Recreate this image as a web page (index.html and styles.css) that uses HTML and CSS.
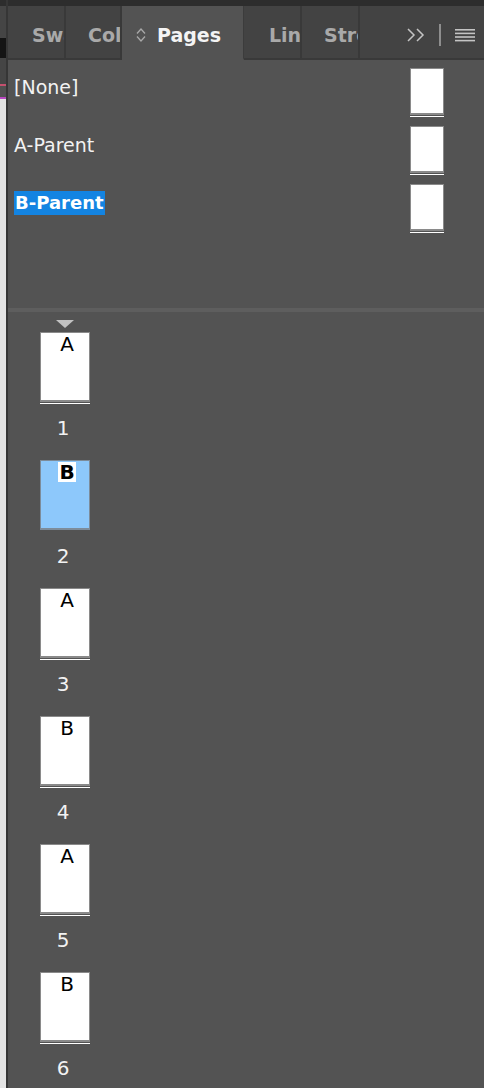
FILE: index.html
```html
<!DOCTYPE html>
<html>
<head>
<meta charset="utf-8">
<link rel="stylesheet" href="styles.css">
</head>
<body>
<div class="app">
  <div class="strip">
    <div class="seg seg-top"></div>
    <div class="seg seg-grey1"></div>
    <div class="seg seg-black"></div>
    <div class="seg seg-grey2"></div>
    <div class="seg seg-pink"></div>
    <div class="seg seg-grey3"></div>
    <div class="seg seg-mag"></div>
    <div class="seg seg-light"></div>
  </div>
  <div class="strip-edge"></div>
  <div class="panel">
    <div class="topbar"></div>
    <div class="tabs">
      <div class="tab tab-sw"><span class="tab-label tab-clip">Swatches</span></div>
      <div class="tab tab-col"><span class="tab-label tab-clip">Color</span></div>
      <div class="tab tab-active">
        <svg class="updown" width="10" height="16" viewBox="0 0 10 16"><path d="M1 6.5 L5 2 L9 6.5" fill="none" stroke="#a8a8a8" stroke-width="1.3"/><path d="M1 9.5 L5 14 L9 9.5" fill="none" stroke="#a8a8a8" stroke-width="1.3"/></svg>
        <span class="tab-label">Pages</span>
      </div>
      <div class="tab tab-lin"><span class="tab-label tab-clip">Links</span></div>
      <div class="tab tab-str"><span class="tab-label tab-clip">Stroke</span></div>
      <div class="tab tab-rest">
        <svg class="more" width="18" height="14" viewBox="0 0 18 14"><path d="M1 1 L7 7 L1 13" fill="none" stroke="#c4c4c4" stroke-width="1.5"/><path d="M10 1 L16 7 L10 13" fill="none" stroke="#c4c4c4" stroke-width="1.5"/></svg>
        <span class="vbar"></span>
        <svg class="menu" width="20" height="13" viewBox="0 0 20 13"><rect x="0" y="0" width="20" height="1.6" fill="#c4c4c4"/><rect x="0" y="3.6" width="20" height="1.6" fill="#c4c4c4"/><rect x="0" y="7.2" width="20" height="1.6" fill="#c4c4c4"/><rect x="0" y="10.8" width="20" height="1.6" fill="#c4c4c4"/></svg>
      </div>
    </div>
    <div class="parents">
      <div class="prow"><span class="pname">[None]</span><div class="thumb"></div></div>
      <div class="prow"><span class="pname">A-Parent</span><div class="thumb"></div></div>
      <div class="prow"><span class="pname pname-sel">B-Parent</span><div class="thumb"></div></div>
    </div>
    <div class="splitter"></div>
    <div class="pages">
      <div class="marker"></div>
      <div class="pitem"><div class="page"><span class="pletter">A</span></div><div class="pnum">1</div></div>
      <div class="pitem"><div class="page page-sel"><span class="pletter pletter-sel">B</span></div><div class="pnum">2</div></div>
      <div class="pitem"><div class="page"><span class="pletter">A</span></div><div class="pnum">3</div></div>
      <div class="pitem"><div class="page"><span class="pletter">B</span></div><div class="pnum">4</div></div>
      <div class="pitem"><div class="page"><span class="pletter">A</span></div><div class="pnum">5</div></div>
      <div class="pitem"><div class="page"><span class="pletter">B</span></div><div class="pnum">6</div></div>
    </div>
  </div>
</div>
</body>
</html>
```
FILE: styles.css
```css
html, body {
  margin: 0;
  padding: 0;
  background: #535353;
}
.app {
  display: flex;
  width: 484px;
  height: 1088px;
  overflow: hidden;
  background: #535353;
  font-family: "DejaVu Sans", sans-serif;
}
.strip {
  width: 6px;
  display: flex;
  flex-direction: column;
  flex-shrink: 0;
}
.seg { flex-shrink: 0; }
.seg-top { height: 6px; background: #2d2d2d; }
.seg-grey1 { height: 32px; background: #454545; }
.seg-black { height: 20px; background: #141414; }
.seg-grey2 { height: 26px; background: #454545; }
.seg-pink { height: 2px; background: #c4506e; }
.seg-grey3 { height: 11px; background: #505050; }
.seg-mag { height: 2px; background: #b848c0; }
.seg-light { flex: 1; background: #e4e4e4; }
.strip-edge {
  width: 2px;
  flex-shrink: 0;
  background: #363636;
}
.panel {
  flex: 1;
  display: flex;
  flex-direction: column;
  min-width: 0;
}
.topbar {
  height: 6px;
  background: #2d2d2d;
  flex-shrink: 0;
}
.tabs {
  display: flex;
  height: 54px;
  flex-shrink: 0;
}
.tab {
  box-sizing: border-box;
  height: 54px;
  background: #434343;
  border-right: 2px solid #393939;
  border-bottom: 2px solid #393939;
  padding-top: 18px;
  overflow: hidden;
  white-space: nowrap;
  display: flex;
  align-items: flex-start;
  flex-shrink: 0;
}
.tab-label {
  font-weight: bold;
  font-size: 19px;
  line-height: 22px;
  color: #a9a9a9;
}
.tab-clip {
  display: block;
  flex: 1;
  min-width: 0;
  overflow: hidden;
  white-space: nowrap;
  text-overflow: clip;
}
.tab-sw { width: 58px; padding-left: 24px; }
.tab-col { width: 56px; padding-left: 22px; }
.tab-active {
  width: 122px;
  padding-left: 14px;
  background: #535353;
  border-bottom-color: #535353;
  border-right: 1px solid #3c3c3c;
}
.tab-active .tab-label { color: #f4f4f4; margin-left: 11px; }
.updown { margin-top: 3px; }
.tab-lin { width: 58px; padding-left: 25px; }
.tab-str { width: 58px; padding-left: 22px; }
.tab-rest {
  flex: 1;
  border-right: none;
  padding-top: 0;
  padding-right: 9px;
  align-items: center;
  justify-content: flex-end;
}
.more { margin-top: 6px; }
.vbar {
  width: 2px;
  height: 22px;
  background: #8e8e8e;
  margin: 6px 14px 0 14px;
}
.menu { margin-top: 6px; }
.parents {
  box-sizing: border-box;
  height: 248px;
  padding: 8px 40px 0 6px;
  flex-shrink: 0;
}
.prow {
  height: 58px;
  display: flex;
  justify-content: space-between;
  align-items: flex-start;
}
.pname {
  margin-top: 7px;
  font-size: 19px;
  line-height: 24px;
  color: #f2f2f2;
}
.pname-sel {
  font-size: 18px;
  font-weight: bold;
  background: #1384e2;
  color: #ffffff;
  padding: 0 1px;
}
.thumb {
  box-sizing: border-box;
  width: 34px;
  height: 47px;
  background: #ffffff;
  border: 1px solid #8a8a8a;
  border-bottom-width: 2px;
  box-shadow: 0 1px 0 #535353, 0 2px 0 #ffffff;
}
.splitter {
  height: 4px;
  background: #5e5e5e;
  flex-shrink: 0;
}
.pages {
  flex: 1;
  display: flex;
  flex-direction: column;
  align-items: flex-start;
  padding: 8px 0 0 32px;
  gap: 20px;
}
.marker {
  width: 0;
  height: 0;
  border-left: 9px solid transparent;
  border-right: 9px solid transparent;
  border-top: 8px solid #c2c2c2;
  margin-left: 16px;
  margin-bottom: -16px;
}
.pitem {
  width: 50px;
  display: flex;
  flex-direction: column;
  align-items: center;
}
.page {
  box-sizing: border-box;
  width: 50px;
  height: 70px;
  background: #ffffff;
  border: 1px solid #8a8a8a;
  border-bottom-width: 2px;
  box-shadow: 0 1px 0 #535353, 0 2px 0 #ffffff;
  display: flex;
  justify-content: center;
  align-items: flex-start;
  padding: 1px 0 0 4px;
}
.page-sel {
  background: #8dc8fb;
  border-color: #7d8c9a;
  box-shadow: none;
}
.pletter {
  font-size: 20px;
  line-height: 20px;
  color: #000000;
}
.pletter-sel {
  font-weight: bold;
  background: #ffffff;
  padding: 0 1px;
}
.pnum {
  margin-top: 14px;
  font-size: 20px;
  line-height: 24px;
  color: #f2f2f2;
  padding-right: 4px;
}
```
